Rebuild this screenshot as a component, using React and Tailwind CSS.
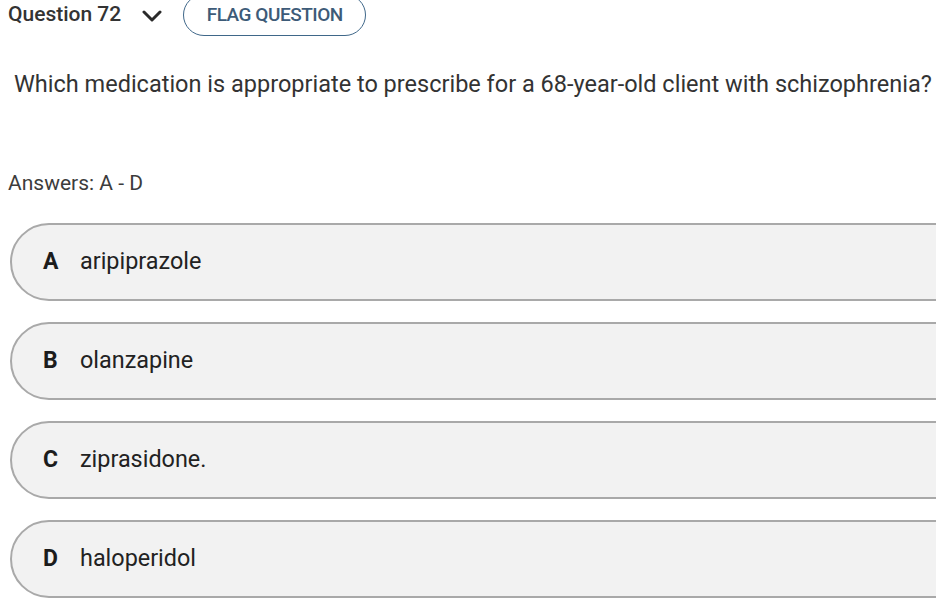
import React from 'react';

const options = [
  { letter: 'A', text: 'aripiprazole' },
  { letter: 'B', text: 'olanzapine' },
  { letter: 'C', text: 'ziprasidone.' },
  { letter: 'D', text: 'haloperidol' },
];

const App = () => {
  return (
    <div className="w-[936px] h-[616px] overflow-hidden bg-white font-['Roboto',sans-serif]">
      <div className="flex items-center h-[42px] -mt-[6px] pl-[8px]">
        <span className="text-[21px] font-medium text-[#333]">Question 72</span>
        <svg className="ml-[21px] mt-[1px]" width="20" height="14" viewBox="0 0 20 14">
          <polyline points="2,3 10,11 18,3" fill="none" stroke="#2a2a2a" strokeWidth="3" strokeLinecap="round" strokeLinejoin="round" />
        </svg>
        <button className="ml-[21px] h-[42px] w-[183px] rounded-full border-[1.5px] border-[#3f6789] text-[19px] font-medium text-[#3d5b78] tracking-tight">
          FLAG QUESTION
        </button>
      </div>

      <p className="mt-[31px] pl-[14px] text-[23.5px] text-[#333] whitespace-nowrap">
        Which medication is appropriate to prescribe for a 68-year-old client with schizophrenia?
      </p>

      <p className="mt-[66px] pl-[8px] text-[21px] text-[#3c3c3c]">Answers: A - D</p>

      <div className="mt-[23px] ml-[10px] flex flex-col gap-[21px]">
        {options.map((o) => (
          <div
            key={o.letter}
            className="w-[960px] h-[78px] flex items-center rounded-l-[39px] border-2 border-[#a9a9a9] bg-[#f2f2f2]"
          >
            <span className="ml-[31px] w-[37px] text-[23px] font-bold text-[#1c1c1c]">{o.letter}</span>
            <span className="text-[23.4px] text-[#222]">{o.text}</span>
          </div>
        ))}
      </div>
    </div>
  );
};

export default App;
